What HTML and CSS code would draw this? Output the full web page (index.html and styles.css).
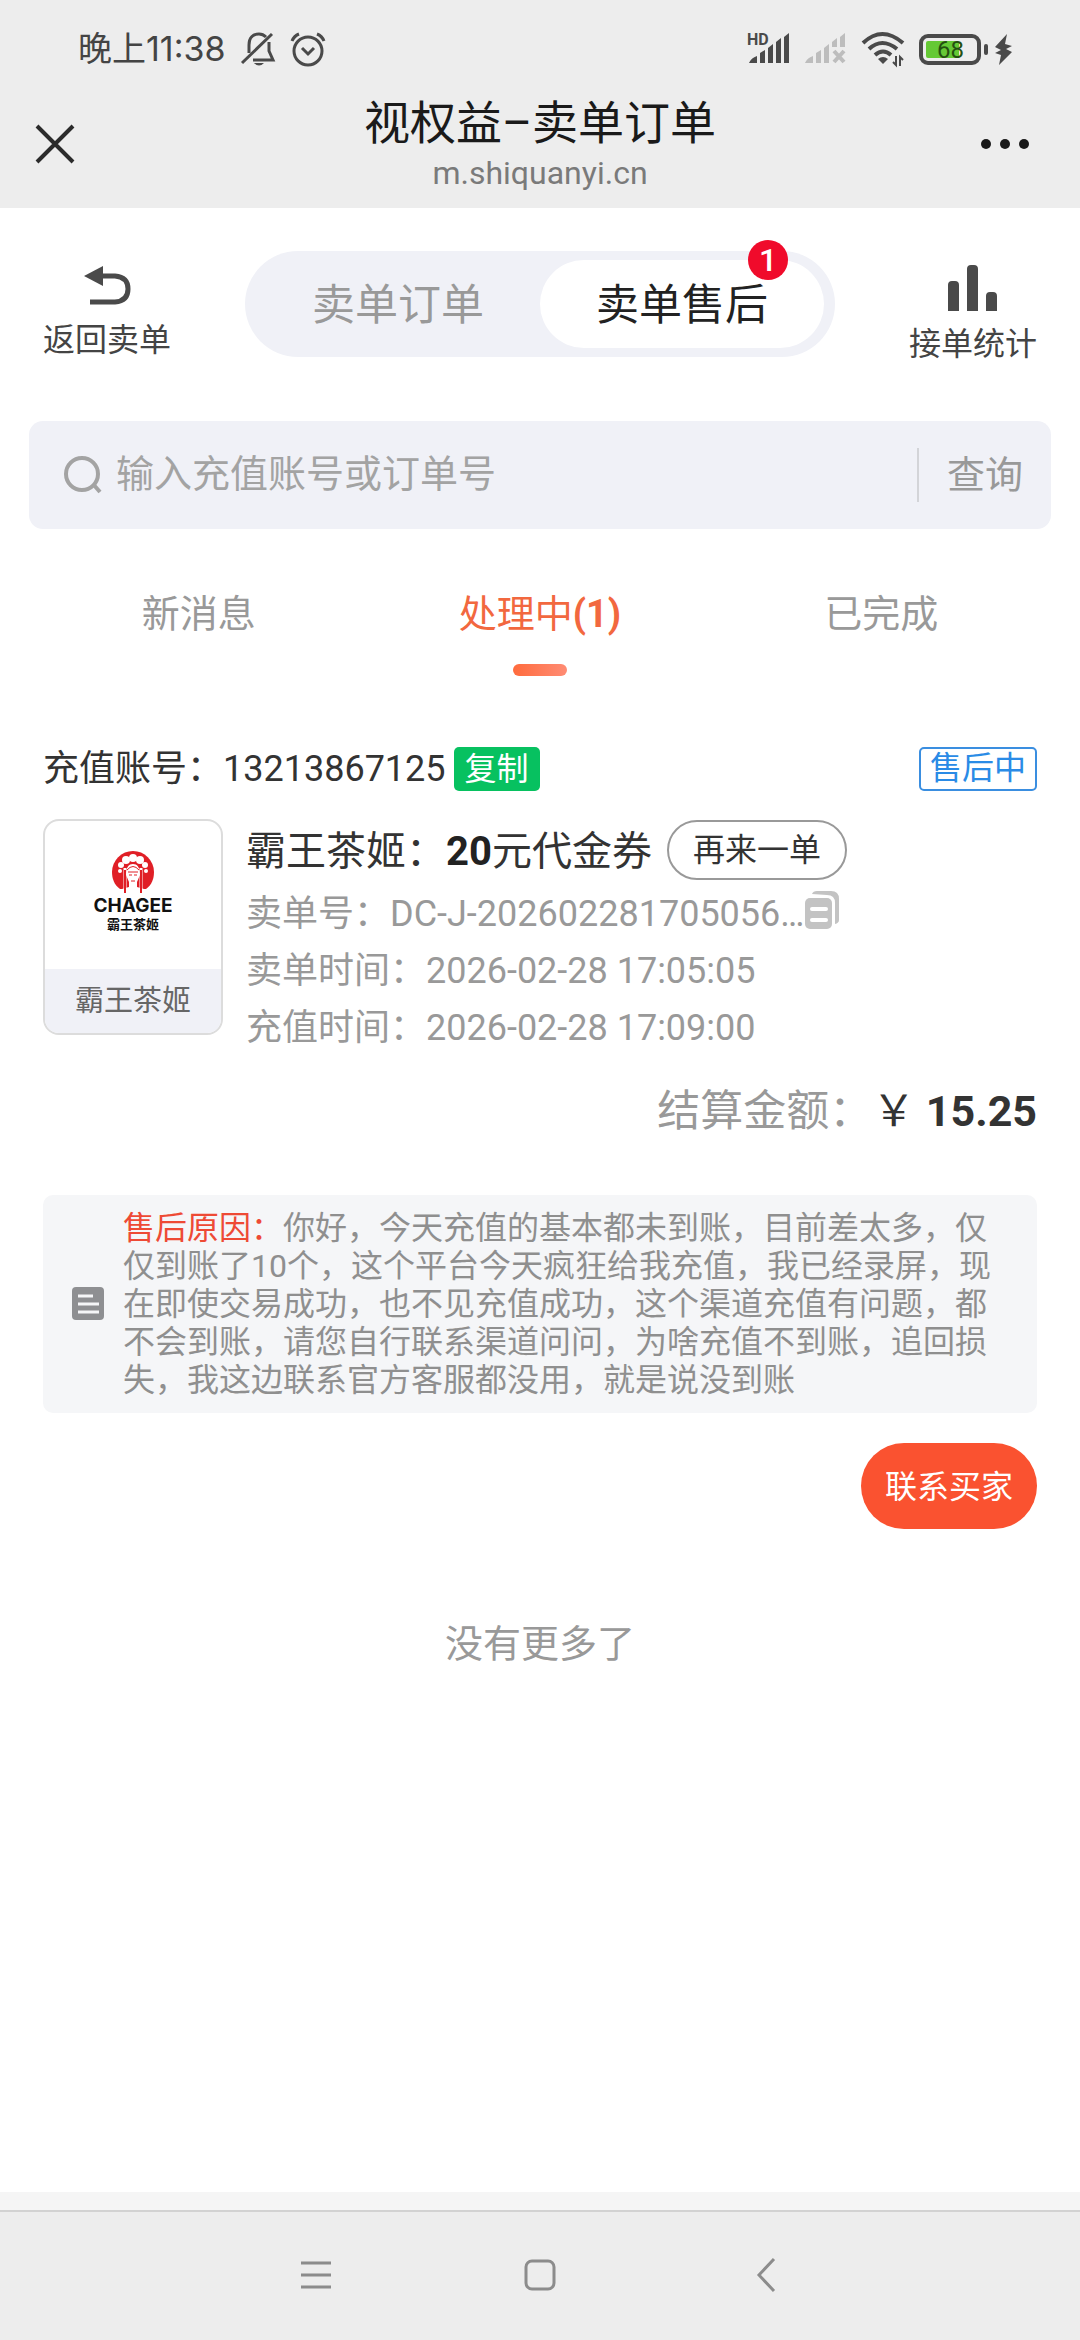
FILE: index.html
```html
<!DOCTYPE html>
<html lang="zh-CN">
<head>
<meta charset="utf-8">
<title>视权益–卖单订单</title>
<meta name="viewport" content="width=device-width">
<link rel="stylesheet" href="styles.css">
</head>
<body>

<header class="top">
	<div class="status">
		<div class="status-left">
			<span class="clock">晚上11:38</span>
			<svg width="34" height="36" viewBox="0 0 34 36" fill="none" stroke="#4a4a4a" stroke-width="3">
				<path d="M8 22V14C8 7 12 3 18 3q4 0 7 3M28 11v9l4 9H12"/>
				<path d="M1 32 31 3"/>
				<path d="M13 32h10q-5 5-10 0z" fill="#4a4a4a" stroke="none"/>
			</svg>
			<svg width="36" height="36" viewBox="0 0 36 36" fill="none" stroke="#4a4a4a" stroke-width="3">
				<circle cx="18" cy="20" r="14"/>
				<path d="m12 17 6 6 6-6M2 10q2-5 7-7M34 10q-2-5-7-7"/>
			</svg>
		</div>
		<div class="status-right">
			<svg class="signal" width="44" height="34" viewBox="0 0 44 34" fill="#4a4a4a">
				<text class="hd" x="0" y="13">HD</text>
				<path d="M2 31q2-5 8-7v7zM13 31v-10l5-3v13zM21 31V16l5-4v19zM29 31V10l5-4v25zM37 31V5l5-4v30z"/>
			</svg>
			<svg width="42" height="34" viewBox="0 0 42 34" fill="#bdbdbd">
				<path d="M0 31q2-5 8-7v7zM11 31v-10l5-3v13zM19 31V16l5-4v19zM27 15V10l5-4v9zM35 15V5l5-4v14z"/>
				<path d="m29 19 10 11m0-11-10 11" stroke="#bdbdbd" stroke-width="4"/>
			</svg>
			<svg class="wifi" width="44" height="36" viewBox="0 0 44 36" fill="none" stroke="#4a4a4a" stroke-width="4">
				<path d="M2 12q19-18 40 0M8 18q13-12 28 0M14 24q8-7 16 0"/>
				<path d="M17 28q5-4 10 0l-5 5z" fill="#4a4a4a" stroke="none"/>
				<path d="M35 25v9l-3-3M39 35v-9l3 3" stroke-width="2"/>
			</svg>
			<svg width="94" height="34" viewBox="0 0 94 34">
				<rect x="2" y="4" width="58" height="27" rx="7" fill="none" stroke="#4a4a4a" stroke-width="4"/>
				<rect x="7" y="9" width="33" height="17" rx="2" fill="#65c935"/>
				<rect x="65" y="12" width="4" height="11" rx="2" fill="#4a4a4a"/>
				<text class="level" x="18" y="26">68</text>
				<path d="M88 2 76 15l6 3-6 3 6 2-2 10 13-13-6-3 6-3-7-2z" fill="#4a4a4a"/>
			</svg>
		</div>
	</div>
	<div class="titlebar">
		<button class="icon-btn" aria-label="关闭">
			<svg width="38" height="38" viewBox="0 0 38 38" stroke="#2b2b2b" stroke-width="4"><path d="m1 1 36 36M37 1 1 37"/></svg>
		</button>
		<div class="title">
			<h1>视权益–卖单订单</h1>
			<p>m.shiquanyi.cn</p>
		</div>
		<button class="icon-btn more" aria-label="更多">
			<svg width="50" height="10" viewBox="0 0 50 10" fill="#1a1a1a"><circle cx="6" cy="5" r="5"/><circle cx="25" cy="5" r="5"/><circle cx="44" cy="5" r="5"/></svg>
		</button>
	</div>
</header>

<main>
	<div class="switcher">
		<a href="#" class="side">
			<svg width="48" height="42" viewBox="0 0 48 42"><path d="M1 11 20 1v20z" fill="#4a4a4a"/><path d="M19 11h13q13 1 13 13t-13 13H7" fill="none" stroke="#4a4a4a" stroke-width="5"/></svg>
			返回卖单
		</a>
		<div class="pill">
			<button>卖单订单</button>
			<button class="on">卖单售后<span class="badge">1</span></button>
		</div>
		<a href="#" class="side">
			<svg width="50" height="46" viewBox="0 0 50 46" fill="#4a4a4a"><path d="M0 46V20q0-4 4-4h3q4 0 4 4v26zM19 46V4q0-4 4-4h3q4 0 4 4v42zM38 46V31q0-4 4-4h3q4 0 4 4v15z"/></svg>
			接单统计
		</a>
	</div>

	<form class="search">
		<svg width="38" height="38" viewBox="0 0 38 38" fill="none" stroke="#a3a3a3" stroke-width="4"><circle cx="18" cy="18" r="16"/><path d="m29 28 7 8"/></svg>
		<input type="text" aria-label="搜索" placeholder="输入充值账号或订单号">
		<button type="button">查询</button>
	</form>

	<nav class="tabs">
		<button>新消息</button>
		<button class="on">处理中<b>(1)</b></button>
		<button>已完成</button>
	</nav>

	<section class="order">
		<div class="account">
			<span class="number">充值账号：13213867125</span>
			<button class="copy">复制</button>
			<span class="state">售后中</span>
		</div>
		<div class="goods">
			<div class="brand">
				<div class="logo">
					<svg width="44" height="44" viewBox="0 0 44 44">
						<path d="M9 39C3 35 1 28 1 22a21 21 0 0 1 42 0c0 6-2 13-8 17H9z" fill="#e01f26"/>
						<g fill="#fff">
							<circle cx="22" cy="8" r="4"/><circle cx="15" cy="10" r="4"/><circle cx="29" cy="10" r="4"/>
							<circle cx="10" cy="15" r="3"/><circle cx="34" cy="15" r="3"/><circle cx="9" cy="21" r="2"/><circle cx="35" cy="21" r="2"/>
							<path d="M15 25c0-8 3-11 7-11s7 3 7 11l-3 7v5l7 2v5H11v-5l7-2v-5z"/>
						</g>
						<path d="M14 18v25M30 18v25" stroke="#fff" stroke-width="3"/>
						<path d="M14 20v23M30 20v23" stroke="#e01f26" stroke-width="2"/>
						<path d="M16 20q6-7 12 0M17 22h10M18 25h3m2 0h3M20 31h4" fill="none" stroke="#e01f26"/>
					</svg>
					<strong>CHAGEE</strong>
					<small>霸王茶姬</small>
				</div>
				<div class="brand-name">霸王茶姬</div>
			</div>
			<div class="info">
				<div class="name">
					<span>霸王茶姬：<b>20</b>元代金券</span>
					<button>再来一单</button>
				</div>
				<p>卖单号：DC-J-202602281705056…<button class="icon-btn" aria-label="复制卖单号">
					<svg width="36" height="40" viewBox="0 0 36 40"><path d="M8 4q1-3 5-3h14q8 0 8 8v21q0 3-4 4V13q0-8-8-8z" fill="#c3c3c3"/><rect x="1" y="8" width="27" height="31" rx="5" fill="#c3c3c3"/><path d="M8 19h14M8 30h14" stroke="#fff" stroke-width="4" stroke-linecap="round"/></svg>
				</button></p>
				<p>卖单时间：2026-02-28 17:05:05</p>
				<p>充值时间：2026-02-28 17:09:00</p>
			</div>
		</div>
		<div class="amount">结算金额：<span>￥ <b>15.25</b></span></div>
		<div class="reason">
			<svg width="32" height="34" viewBox="0 0 32 34"><rect width="32" height="33" rx="4" fill="#8e8f92"/><path d="M6 9h15M6 17h21M6 25h21" stroke="#f5f6f8" stroke-width="3"/></svg>
			<p><em>售后原因：</em>你好，今天充值的基本都未到账，目前差太多，仅仅到账了10个，这个平台今天疯狂给我充值，我已经录屏，现在即使交易成功，也不见充值成功，这个渠道充值有问题，都不会到账，请您自行联系渠道问问，为啥充值不到账，追回损失，我这边联系官方客服都没用，就是说没到账</p>
		</div>
		<button class="contact">联系买家</button>
	</section>

	<p class="nomore">没有更多了</p>
</main>

<footer class="navbar">
	<button class="icon-btn" aria-label="菜单"><svg width="34" height="34" viewBox="0 0 34 34" stroke="#8c8c8c" stroke-width="3"><path d="M2 5h30M2 17h30M2 29h30"/></svg></button>
	<button class="icon-btn" aria-label="主页"><svg width="34" height="34" viewBox="0 0 34 34" fill="none" stroke="#8c8c8c" stroke-width="3"><rect x="3" y="3" width="28" height="28" rx="6"/></svg></button>
	<button class="icon-btn" aria-label="返回"><svg width="34" height="34" viewBox="0 0 34 34" fill="none" stroke="#8c8c8c" stroke-width="3"><path d="M27 1 12 17l15 16"/></svg></button>
</footer>

</body>
</html>
```
FILE: styles.css
```css
* {
	box-sizing: border-box;
	margin: 0;
	padding: 0;
}

body {
	display: flex;
	flex-direction: column;
	min-height: 100vh;
	background: #fff;
	color: #333;
	font-family: Roboto, "Noto Sans CJK SC", sans-serif;
	font-size: 36px;
}

button {
	border: none;
	background: none;
	color: inherit;
	font: inherit;
	cursor: pointer;
}

a {
	color: inherit;
	text-decoration: none;
}

svg {
	display: block;
	flex: none;
	overflow: visible;
}

.icon-btn {
	display: flex;
}

/* status bar + title */
.top {
	background: #ededed;
	padding-bottom: 14px;
}

.status {
	display: flex;
	justify-content: space-between;
	padding: 30px 67px 0 78px;
	height: 94px;
}

.status-left, .status-right {
	display: flex;
	align-items: center;
	height: 38px;
}

.status-left {
	gap: 15px;
	color: #444;
}

.status-right {
	gap: 14px;
}

.clock {
	font-family: Inter, "Noto Sans CJK SC", sans-serif;
	font-size: 34px;
	line-height: 36px;
}

.hd {
	font-size: 16px;
	font-weight: bold;
}

.level {
	font-size: 24px;
	fill: #245010;
}

.titlebar {
	display: grid;
	grid-template-columns: 1fr auto 1fr;
	align-items: center;
	padding: 0 36px;
	height: 100px;
}

.titlebar .more {
	justify-self: end;
	padding-right: 14px;
}

.title {
	text-align: center;
}

.title h1 {
	color: #1a1a1a;
	font-size: 46px;
	font-weight: normal;
	line-height: 58px;
}

.title p {
	color: #7a7a7a;
	font-size: 32px;
	line-height: 42px;
}

main {
	flex: 1;
}

/* top switch */
.switcher {
	display: flex;
	justify-content: space-between;
	align-items: flex-start;
	padding: 43px 43px 0;
}

.side {
	display: flex;
	flex-direction: column;
	align-items: center;
	gap: 13px;
	padding-top: 14px;
	color: #444;
	font-size: 32px;
	line-height: 40px;
}

.pill {
	display: flex;
	padding: 9px 11px;
	border-radius: 53px;
	background: #f0f1f7;
}

.pill button {
	position: relative;
	width: 284px;
	height: 88px;
	padding-bottom: 6px;
	border-radius: 44px;
	color: #999;
	font-size: 43px;
}

.pill .on {
	background: #fff;
	color: #222;
}

.badge {
	position: absolute;
	top: -20px;
	right: 36px;
	width: 40px;
	height: 40px;
	border-radius: 50%;
	background: #f00b2b;
	color: #fff;
	font-size: 32px;
	font-weight: 500;
	line-height: 40px;
}

.search {
	display: flex;
	align-items: center;
	gap: 14px;
	height: 108px;
	margin: 57px 29px 0;
	padding: 0 28px 0 35px;
	border-radius: 14px;
	background: #f0f1f7;
}

.search input {
	flex: 1;
	min-width: 0;
	padding-bottom: 2px;
	border: none;
	outline: none;
	background: none;
	font: inherit;
	font-size: 38px;
}

.search input::placeholder {
	color: #a3a3a3;
}

.search button {
	height: 54px;
	padding-left: 28px;
	border-left: 2px solid #d3d4d8;
	color: #999;
	font-size: 38px;
	line-height: 50px;
}

.tabs {
	display: flex;
	padding: 59px 28px 0;
}

.tabs button {
	display: flex;
	flex-wrap: wrap;
	justify-content: center;
	align-content: flex-start;
	flex: 1;
	height: 90px;
	color: #999;
	font-size: 38px;
	line-height: 52px;
}

.tabs .on {
	color: #f2683f;
}

.tabs .on:after {
	content: "";
	flex: none;
	width: 54px;
	height: 12px;
	margin: 24px 100px 0;
	border-radius: 6px;
	background: linear-gradient(to right, #ff6b3d, #ff8c74);
}

/* order card */
.order {
	padding: 67px 43px 0;
}

.account {
	display: flex;
	align-items: center;
	gap: 8px;
	height: 48px;
}

.number {
	padding-bottom: 8px;
}

.copy, .state {
	height: 44px;
	padding: 0 11px;
	border-radius: 5px;
	font-size: 32px;
	line-height: 40px;
}

.copy {
	background: #07c160;
	color: #fff;
}

.state {
	margin-left: auto;
	padding: 0 9px;
	border: 2px solid #3a8ee0;
	color: #2a8be6;
	line-height: 38px;
}

.goods {
	display: flex;
	gap: 23px;
	margin-top: 26px;
}

.brand {
	display: flex;
	flex-direction: column;
	width: 180px;
	height: 216px;
	border: 2px solid #dcdcdc;
	border-radius: 16px;
	overflow: hidden;
}

.logo {
	display: flex;
	flex: 1;
	flex-direction: column;
	align-items: center;
	padding-top: 29px;
	color: #111;
}

.logo strong {
	font-family: Inter, sans-serif;
	font-size: 19px;
	line-height: 23px;
}

.logo small {
	font-size: 13px;
	font-weight: bold;
	line-height: 16px;
}

.brand-name {
	background: #f0f1f7;
	color: #666;
	font-size: 29px;
	line-height: 64px;
	text-align: center;
}

.info {
	flex: 1;
}

.name {
	display: flex;
	align-items: center;
	gap: 15px;
	color: #333;
	font-size: 40px;
}

.name span {
	padding-bottom: 4px;
}

.name b {
	color: #222;
}

.name button {
	height: 60px;
	padding: 0 24px;
	border: 2px solid #999;
	border-radius: 30px;
	font-size: 32px;
	line-height: 52px;
}

.info p {
	display: flex;
	align-items: center;
	height: 57px;
	color: #999;
}

.amount {
	margin-top: 27px;
	color: #999;
	font-size: 43px;
	line-height: 64px;
	text-align: right;
}

.amount span {
	color: #333;
}

.reason {
	display: flex;
	align-items: center;
	gap: 19px;
	margin-top: 52px;
	padding: 14px 40px 14px 29px;
	border-radius: 10px;
	background: #f5f6f8;
	color: #8f8f8f;
	font-size: 32px;
	line-height: 38px;
}

.reason em {
	color: #ee4a35;
	font-style: normal;
}

.contact {
	display: block;
	height: 86px;
	margin: 30px 0 0 auto;
	padding: 0 24px 4px;
	border-radius: 43px;
	background: #fa5230;
	color: #fff;
	font-size: 32px;
}

.nomore {
	margin-top: 88px;
	color: #999;
	font-size: 38px;
	line-height: 54px;
	text-align: center;
}

/* system keys */
.navbar {
	display: flex;
	justify-content: center;
	align-items: center;
	gap: 190px;
	height: 148px;
	border-top: 18px solid #f5f5f5;
	background: #ededed;
	box-shadow: inset 0 2px #d2d2d2;
}
```
